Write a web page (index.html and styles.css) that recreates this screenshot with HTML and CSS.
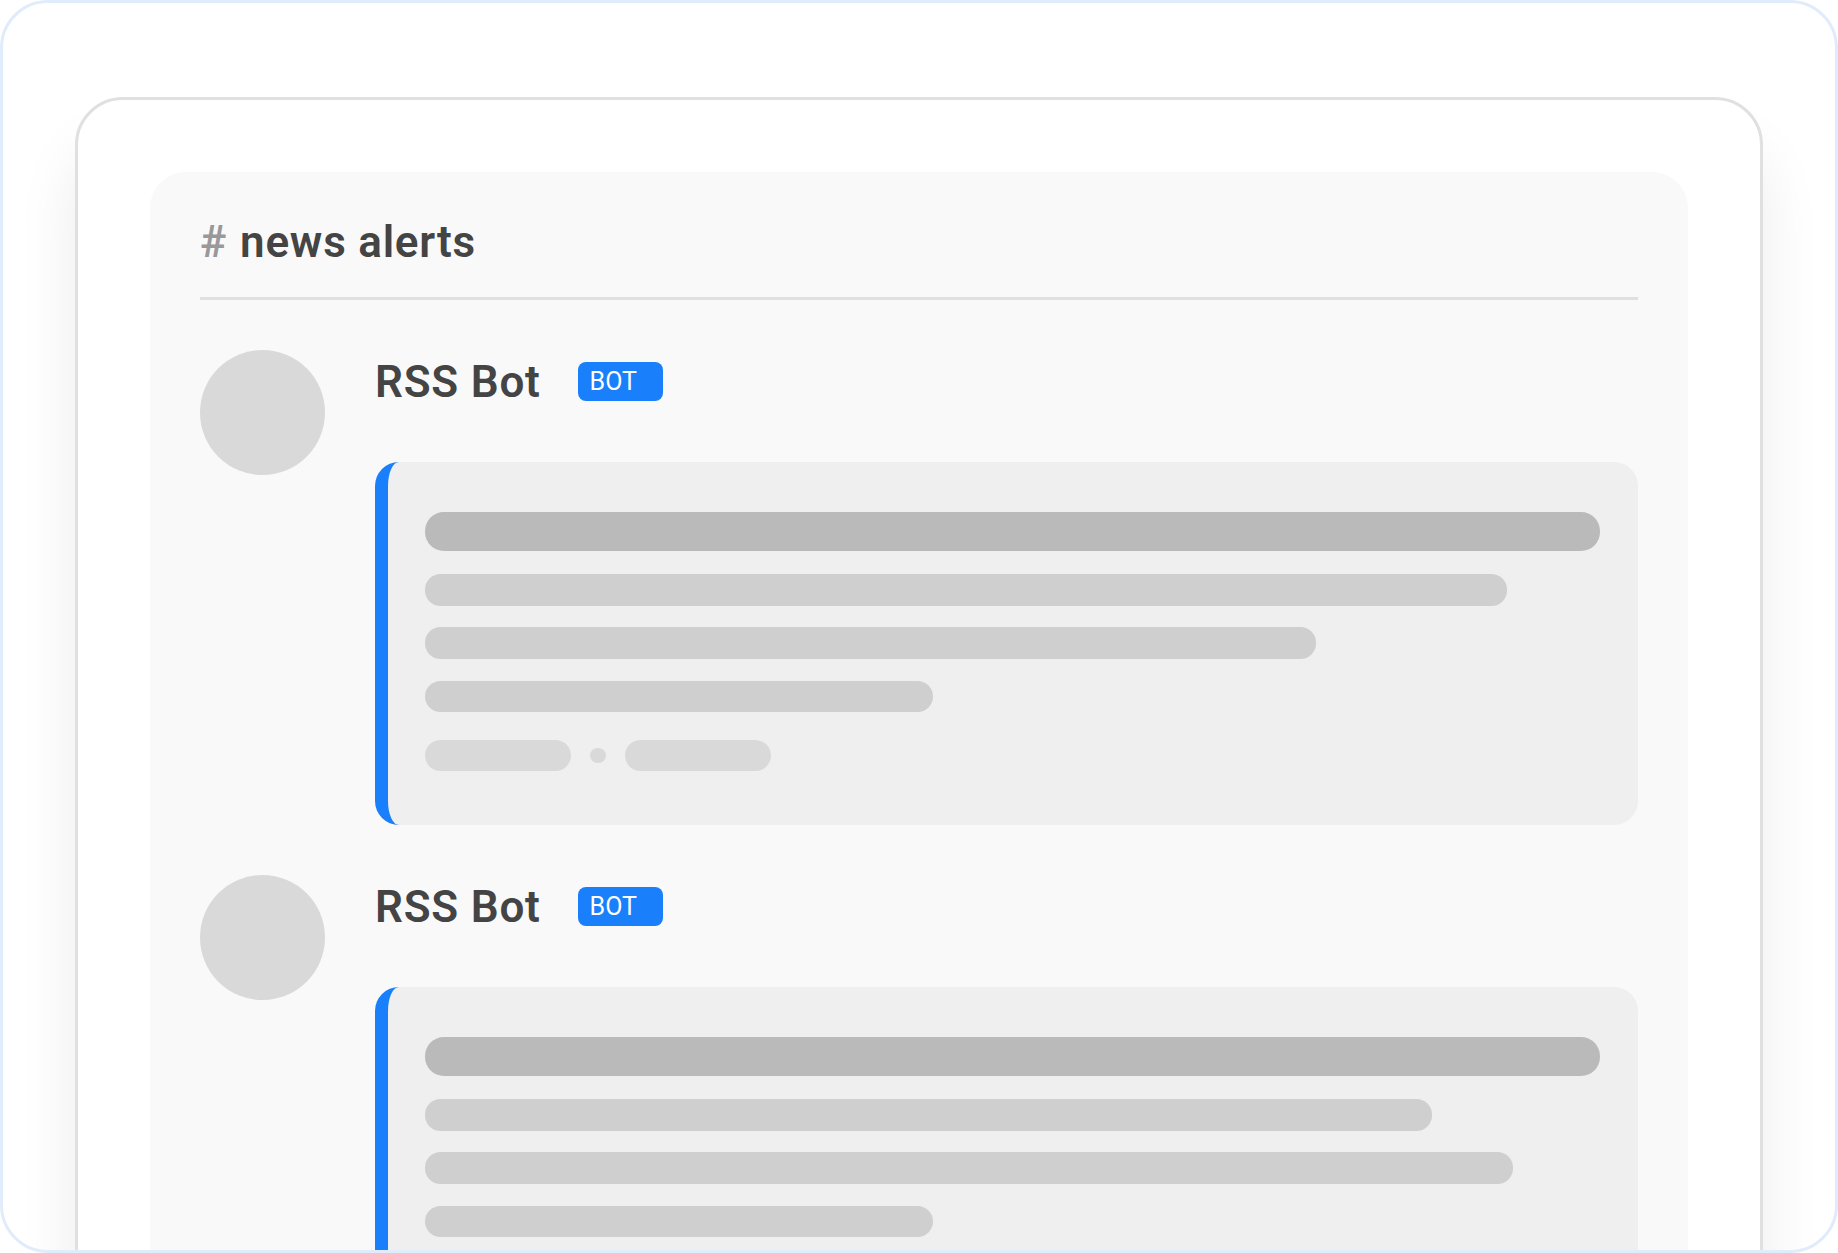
FILE: index.html
```html
<!DOCTYPE html>
<html lang="en">
<head>
<meta charset="utf-8">
<title>news alerts</title>
<link rel="stylesheet" href="styles.css">
</head>
<body>
<div class="shell">
  <div class="device">
    <div class="panel">
      <header class="channel"><span class="hash">#</span><span class="channel-name">news alerts</span></header>
      <article class="message">
        <div class="avatar"></div>
        <div class="message-body">
          <div class="author"><span class="author-name">RSS Bot</span><span class="badge">BOT</span></div>
          <div class="attachment">
            <div class="bar bar-title"></div>
            <div class="bar bar-line w-a"></div>
            <div class="bar bar-line w-b"></div>
            <div class="bar bar-line w-c"></div>
            <div class="meta"><div class="pill"></div><div class="dot"></div><div class="pill"></div></div>
          </div>
        </div>
      </article>
      <article class="message">
        <div class="avatar"></div>
        <div class="message-body">
          <div class="author"><span class="author-name">RSS Bot</span><span class="badge">BOT</span></div>
          <div class="attachment">
            <div class="bar bar-title"></div>
            <div class="bar bar-line w-d"></div>
            <div class="bar bar-line w-e"></div>
            <div class="bar bar-line w-c"></div>
            <div class="meta"><div class="pill"></div><div class="dot"></div><div class="pill"></div></div>
          </div>
        </div>
      </article>
    </div>
  </div>
</div>
</body>
</html>
```
FILE: styles.css
```css
* { box-sizing: border-box; }
html, body { margin: 0; padding: 0; background: #fff; }
body { font-family: Roboto, "Liberation Sans", sans-serif; color: #444; }
.shell {
  height: 1253px;
  border: 3px solid #e0ecfc;
  border-radius: 48px;
  padding: 94px 72px 0;
  overflow: hidden;
  background: #fff;
}
.device {
  height: 1400px;
  border: 3px solid #e0e0e0;
  border-radius: 48px;
  padding: 72px 72px 0;
  background: #fff;
  box-shadow: 0 50px 62px rgba(0, 0, 0, 0.08);
}
.panel {
  height: 1400px;
  background: #f9f9f9;
  border-radius: 36px;
  padding: 50px;
}
.channel {
  display: flex;
  align-items: center;
  gap: 13px;
  height: 75px;
  padding-bottom: 35px;
  box-shadow: 0 3px 0 #e0e0e0;
  font-size: 44px;
  line-height: 40px;
  font-weight: 600;
  letter-spacing: 0.77px;
  margin-bottom: 53px;
}
.hash { color: #999; }
.message { display: flex; gap: 50px; margin-bottom: 50px; }
.avatar { flex: none; width: 125px; height: 125px; border-radius: 50%; background: #d9d9d9; }
.message-body { flex: 1; min-width: 0; }
.author { display: flex; align-items: center; gap: 37px; height: 62px; margin-bottom: 50px; }
.author-name { padding-top: 2px; font-size: 44px; font-weight: 600; line-height: 64px; letter-spacing: 0.77px; }
.badge {
  width: 85px;
  height: 39px;
  padding-left: 12px;
  border-radius: 8px;
  background: #1a7ffb;
  color: #fff;
  font-size: 25px;
  font-weight: 400;
  line-height: 39px;
}
.attachment {
  height: 363px;
  border-left: 13px solid #1a7ffb;
  border-radius: 24px;
  background: #efefef;
  padding: 50px 38px 50px 37px;
}
.bar { border-radius: 19px; }
.bar-title { height: 38.5px; background: #bababa; margin-bottom: 23.5px; }
.bar-line { height: 31.5px; background: #cfcfcf; margin-bottom: 21.75px; border-radius: 15.6px; }
.w-a { width: 1082px; }
.w-b { width: 891px; }
.w-c { width: 508px; }
.w-d { width: 1007px; }
.w-e { width: 1088px; }
.meta { display: flex; align-items: center; gap: 19px; margin-top: 28px; }
.pill { width: 146px; height: 31.25px; border-radius: 15.6px; background: #d9d9d9; }
.dot { width: 15.6px; height: 15.6px; border-radius: 50%; background: #d9d9d9; }
```
